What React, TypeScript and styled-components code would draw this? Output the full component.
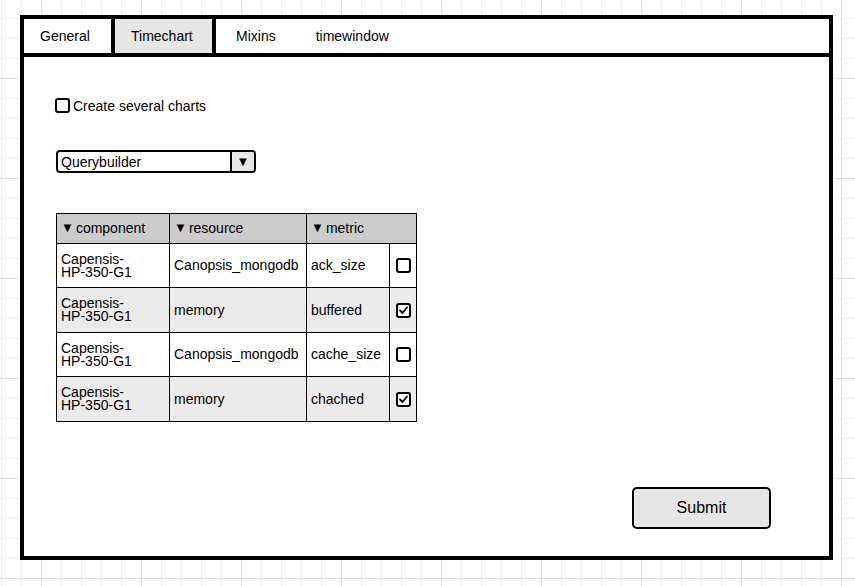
import React from "react";
import styled, { createGlobalStyle } from "styled-components";

const Global = createGlobalStyle`
  html, body {
    margin: 0;
    padding: 0;
    min-height: 100%;
  }
  body {
    min-height: 100vh;
    font-family: "Liberation Sans", Arial, Helvetica, sans-serif;
    font-size: 14px;
    color: #000;
    background-color: #fff;
    background-image:
      linear-gradient(to right, #dedede 1px, transparent 1px),
      linear-gradient(to bottom, #dedede 1px, transparent 1px),
      linear-gradient(to right, #efefef 1px, transparent 1px),
      linear-gradient(to bottom, #efefef 1px, transparent 1px);
    background-size: 100px 100px, 100px 100px, 20px 20px, 20px 20px;
    background-position: 41px 78px, 41px 78px, 1px 18px, 1px 18px;
  }
`;

const Page = styled.div`
  padding: 15px 0 0 20px;
`;

const Frame = styled.div`
  box-sizing: border-box;
  width: 813px;
  height: 545px;
  border: 4px solid #000;
  background: #fff;
  display: flex;
  flex-direction: column;
`;

const TabBar = styled.div`
  box-sizing: border-box;
  height: 38px;
  border-bottom: 4px solid #000;
  display: flex;
  align-items: stretch;
`;

const Tab = styled.div<{ $w?: number; $active?: boolean; $boxed?: boolean }>`
  box-sizing: border-box;
  display: flex;
  align-items: center;
  width: ${(p) => (p.$w ? `${p.$w}px` : "auto")};
  padding: ${(p) => (p.$w ? "0 0 0 16px" : "0 20px")};
  background: ${(p) => (p.$active ? "#e6e6e6" : "transparent")};
  border-right: ${(p) => (p.$boxed ? "4px solid #000" : "none")};
  font-size: 14px;
`;

const Content = styled.div`
  flex: 1;
  display: flex;
  flex-direction: column;
  align-items: flex-start;
  padding: 40px 0 0 32px;
`;

const CheckRow = styled.label`
  display: flex;
  align-items: center;
  height: 17px;
  margin-left: -1px;
  gap: 3px;
  font-size: 14px;
`;

const Box = styled.span`
  box-sizing: border-box;
  width: 15px;
  height: 15px;
  border: 2px solid #000;
  border-radius: 3px;
  background: #fff;
  display: flex;
  align-items: center;
  justify-content: center;
  flex: none;
`;

const Select = styled.div`
  box-sizing: border-box;
  margin-top: 36px;
  width: 200px;
  height: 23px;
  border: 2px solid #000;
  border-radius: 4px;
  display: flex;
  align-items: stretch;
  overflow: hidden;
  background: #fff;
`;

const SelectValue = styled.div`
  flex: 1;
  display: flex;
  align-items: center;
  padding-left: 3px;
  font-size: 14px;
`;

const SelectArrow = styled.div`
  width: 22px;
  border-left: 2px solid #000;
  background: #e6e6e6;
  display: flex;
  align-items: center;
  justify-content: center;
  font-size: 13px;
`;

const Table = styled.div`
  box-sizing: border-box;
  margin-top: 40px;
  width: 361px;
  border: 1px solid #000;
  display: flex;
  flex-direction: column;
`;

const Row = styled.div<{ $h: number; $bg: string; $last?: boolean }>`
  box-sizing: border-box;
  display: grid;
  grid-template-columns: 113px 137px 83px 26px;
  height: ${(p) => p.$h}px;
  background: ${(p) => p.$bg};
  border-bottom: ${(p) => (p.$last ? "none" : "1px solid #000")};
`;

const Cell = styled.div<{ $span?: number; $center?: boolean; $noBorder?: boolean }>`
  box-sizing: border-box;
  grid-column: span ${(p) => p.$span || 1};
  display: flex;
  align-items: center;
  justify-content: ${(p) => (p.$center ? "center" : "flex-start")};
  padding-left: ${(p) => (p.$center ? "0" : "4px")};
  border-right: ${(p) => (p.$noBorder ? "none" : "1px solid #000")};
  font-size: 14px;
  line-height: 12.7px;
  white-space: pre-line;
`;

const Tri = styled.span`
  font-size: 13px;
  margin-left: 0;
  margin-right: 2px;
`;

const Submit = styled.button`
  box-sizing: border-box;
  align-self: flex-end;
  margin: 65px 58px 0 0;
  width: 139px;
  height: 42px;
  border: 2px solid #000;
  border-radius: 5px;
  background: #e6e6e6;
  font-family: "Liberation Sans", Arial, Helvetica, sans-serif;
  font-size: 16px;
  color: #000;
  padding: 0;
`;

const Check = () => (
  <svg width="11" height="11" viewBox="0 0 11 11">
    <path d="M2 5.5 L4.5 8 L9 2.5" fill="none" stroke="#000" strokeWidth="1.8" strokeLinecap="round" strokeLinejoin="round" />
  </svg>
);

const rows = [
  { c: "Capensis-\nHP-350-G1", r: "Canopsis_mongodb", m: "ack_size", on: false, h: 44 },
  { c: "Capensis-\nHP-350-G1", r: "memory", m: "buffered", on: true, h: 45 },
  { c: "Capensis-\nHP-350-G1", r: "Canopsis_mongodb", m: "cache_size", on: false, h: 44 },
  { c: "Capensis-\nHP-350-G1", r: "memory", m: "chached", on: true, h: 44 },
];

export default function App() {
  return (
    <>
      <Global />
      <Page>
        <Frame>
          <TabBar>
            <Tab $w={91} $boxed>General</Tab>
            <Tab $w={101} $boxed $active>Timechart</Tab>
            <Tab>Mixins</Tab>
            <Tab>timewindow</Tab>
          </TabBar>
          <Content>
            <CheckRow>
              <Box />
              Create several charts
            </CheckRow>
            <Select>
              <SelectValue>Querybuilder</SelectValue>
              <SelectArrow>▼</SelectArrow>
            </Select>
            <Table>
              <Row $h={30} $bg="#cccccc">
                <Cell><Tri>▼</Tri>component</Cell>
                <Cell><Tri>▼</Tri>resource</Cell>
                <Cell $span={2} $noBorder><Tri>▼</Tri>metric</Cell>
              </Row>
              {rows.map((r, i) => (
                <Row key={i} $h={r.h} $bg={i % 2 ? "#ebebeb" : "#ffffff"} $last={i === rows.length - 1}>
                  <Cell>{r.c}</Cell>
                  <Cell>{r.r}</Cell>
                  <Cell>{r.m}</Cell>
                  <Cell $center $noBorder>
                    <Box>{r.on ? <Check /> : null}</Box>
                  </Cell>
                </Row>
              ))}
            </Table>
            <Submit>Submit</Submit>
          </Content>
        </Frame>
      </Page>
    </>
  );
}
